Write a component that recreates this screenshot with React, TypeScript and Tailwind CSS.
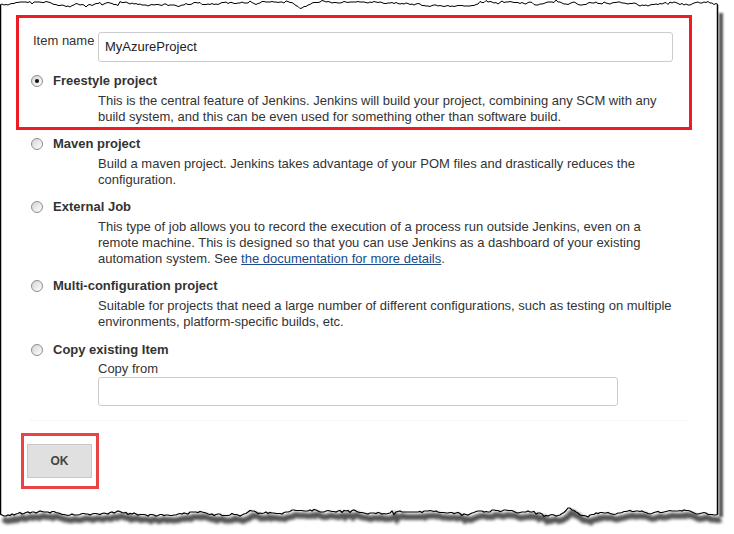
import React from "react";

type Pt = [number, number];

function makeEdge(seed: number, base: number, range: number, dips: Array<[number, number, number]>): Pt[] {
  let s = seed;
  const r = () => {
    s = (s * 9301 + 49297) % 233280;
    return s / 233280;
  };
  let y = base;
  const pts: Pt[] = [];
  for (let x = 0; x <= 718; x += 2) {
    y += (r() - 0.5) * 2.4;
    if (y < base - range) y = base - range + 0.6;
    if (y > base + range) y = base + range - 0.6;
    let yy = y;
    if (r() < 0.12) yy = y + (r() - 0.5) * 3.5;
    for (const [cx, w, d] of dips) {
      const dx = Math.abs(x - cx);
      if (dx < w) yy += d * (1 - dx / w);
    }
    pts.push([x, Math.round(yy * 2) / 2]);
  }
  return pts;
}

const topEdge = makeEdge(17, 4, 2.5, [
  [300, 10, 4],
  [80, 8, -2],
  [580, 6, 3],
]);
const bottomEdge = makeEdge(91, 513, 3, [
  [60, 20, 2],
  [200, 14, -4],
  [250, 10, -3],
  [570, 12, -5],
  [410, 20, 2],
  [650, 15, 2],
]);

const ptsStr = (p: Pt[], dx = 0, dy = 0) => p.map(([x, y]) => `${x + dx},${y + dy}`).join(" ");

function Frame() {
  const tl = topEdge[0][1];
  const tr = topEdge[topEdge.length - 1][1];
  const bl = bottomEdge[0][1];
  const br = bottomEdge[bottomEdge.length - 1][1];
  return (
    <svg className="absolute left-0 top-0 pointer-events-none" width={734} height={534} viewBox="0 0 734 534">
      <defs>
        <filter id="blur" x="-10%" y="-50%" width="120%" height="300%">
          <feGaussianBlur stdDeviation="1.8" />
        </filter>
        <filter id="blur2" x="-50%" y="-5%" width="300%" height="110%">
          <feGaussianBlur stdDeviation="1.2" />
        </filter>
      </defs>
      <polygon points={`0,0 734,0 734,${tr} ${ptsStr([...topEdge].reverse())}`} fill="#ffffff" />
      <polygon points={`${ptsStr(bottomEdge)} 734,534 0,534`} fill="#ffffff" />
      <rect x={718} y={0} width={16} height={534} fill="#ffffff" />
      <rect x={719} y={13} width={4} height={br - 10} fill="#555" filter="url(#blur2)" />
      <polyline points={ptsStr(bottomEdge, 3, 5)} fill="none" stroke="#555" strokeWidth={6} filter="url(#blur)" />
      <polyline points={ptsStr(topEdge)} fill="none" stroke="#000" strokeWidth={1} />
      <polyline points={ptsStr(bottomEdge)} fill="none" stroke="#000" strokeWidth={1.2} />
      <line x1={0.5} y1={tl} x2={0.5} y2={bl} stroke="#000" strokeWidth={1.5} />
      <line x1={717.5} y1={tr} x2={717.5} y2={br} stroke="#000" strokeWidth={1.5} />
    </svg>
  );
}

function Radio({ checked }: { checked?: boolean }) {
  return (
    <div className="w-[12px] h-[12px] rounded-full border border-[#8d8d8d] bg-gradient-to-br from-[#d4d4d4] to-[#ffffff] flex items-center justify-center shrink-0">
      {checked && <div className="w-[4px] h-[4px] rounded-full bg-[#111]" />}
    </div>
  );
}

function Title({ text, checked }: { text: string; checked?: boolean }) {
  return (
    <div className="flex items-center h-[20px]">
      <Radio checked={checked} />
      <span className="ml-[10px] font-bold text-[13px] text-[#333]">{text}</span>
    </div>
  );
}

function Desc({ children }: { children: React.ReactNode }) {
  return <div className="pl-[67px] mt-[2px] leading-[16px] whitespace-nowrap">{children}</div>;
}

export default function App() {
  return (
    <div className="relative w-[734px] h-[534px] bg-white overflow-hidden font-['Liberation_Sans',Arial,sans-serif] text-[13px] text-[#333]">
      <div className="w-[718px] pl-4 pt-[15px]">
        <div className="w-[676px] border-[3px] border-[#ee1c25] pl-3 pt-[14px] pb-[2px]">
          <div className="flex">
            <div className="w-[65px] ml-[2px] pt-[1px] leading-[16px] text-[#333]">Item name</div>
            <div className="w-[575px] h-[30px] border border-[#cccccc] rounded-[3px] flex items-center pl-[6px] text-[13px] text-[#222]">
              MyAzureProject
            </div>
          </div>
          <div className="mt-[9px]">
            <Title text="Freestyle project" checked />
            <Desc>
              This is the central feature of Jenkins. Jenkins will build your project, combining any SCM with any
              <br />
              build system, and this can be even used for something other than software build.
            </Desc>
          </div>
        </div>

        <div className="pl-[15px]">
          <div className="mt-[4px]">
            <Title text="Maven project" />
            <Desc>
              Build a maven project. Jenkins takes advantage of your POM files and drastically reduces the
              <br />
              configuration.
            </Desc>
          </div>
          <div className="mt-[9px]">
            <Title text="External Job" />
            <Desc>
              This type of job allows you to record the execution of a process run outside Jenkins, even on a
              <br />
              remote machine. This is designed so that you can use Jenkins as a dashboard of your existing
              <br />
              automation system. See{" "}
              <a href="#" className="text-[#204a87] underline">
                the documentation for more details
              </a>
              .
            </Desc>
          </div>
          <div className="mt-[9px]">
            <Title text="Multi-configuration project" />
            <Desc>
              Suitable for projects that need a large number of different configurations, such as testing on multiple
              <br />
              environments, platform-specific builds, etc.
            </Desc>
          </div>
          <div className="mt-[10px]">
            <Title text="Copy existing Item" />
            <div className="pl-[67px] mt-[1px]">
              <div className="leading-[16px]">Copy from</div>
              <div className="w-[520px] h-[29px] border border-[#cccccc] rounded-[3px]" />
            </div>
          </div>
        </div>

        <div className="ml-[14px] mt-[14px] w-[660px] border-t border-dotted border-[#f2f2f2]" />

        <div className="ml-[5px] mt-[12px] w-[78px] h-[56px] border-[3px] border-[#e84444] pl-[3px] pt-[8px]">
          <div className="w-[65px] h-[34px] bg-[#e0e0e0] border border-[#c8c8c8] flex items-center justify-center font-bold text-[12px] text-[#444]">
            OK
          </div>
        </div>
      </div>
      <Frame />
    </div>
  );
}
